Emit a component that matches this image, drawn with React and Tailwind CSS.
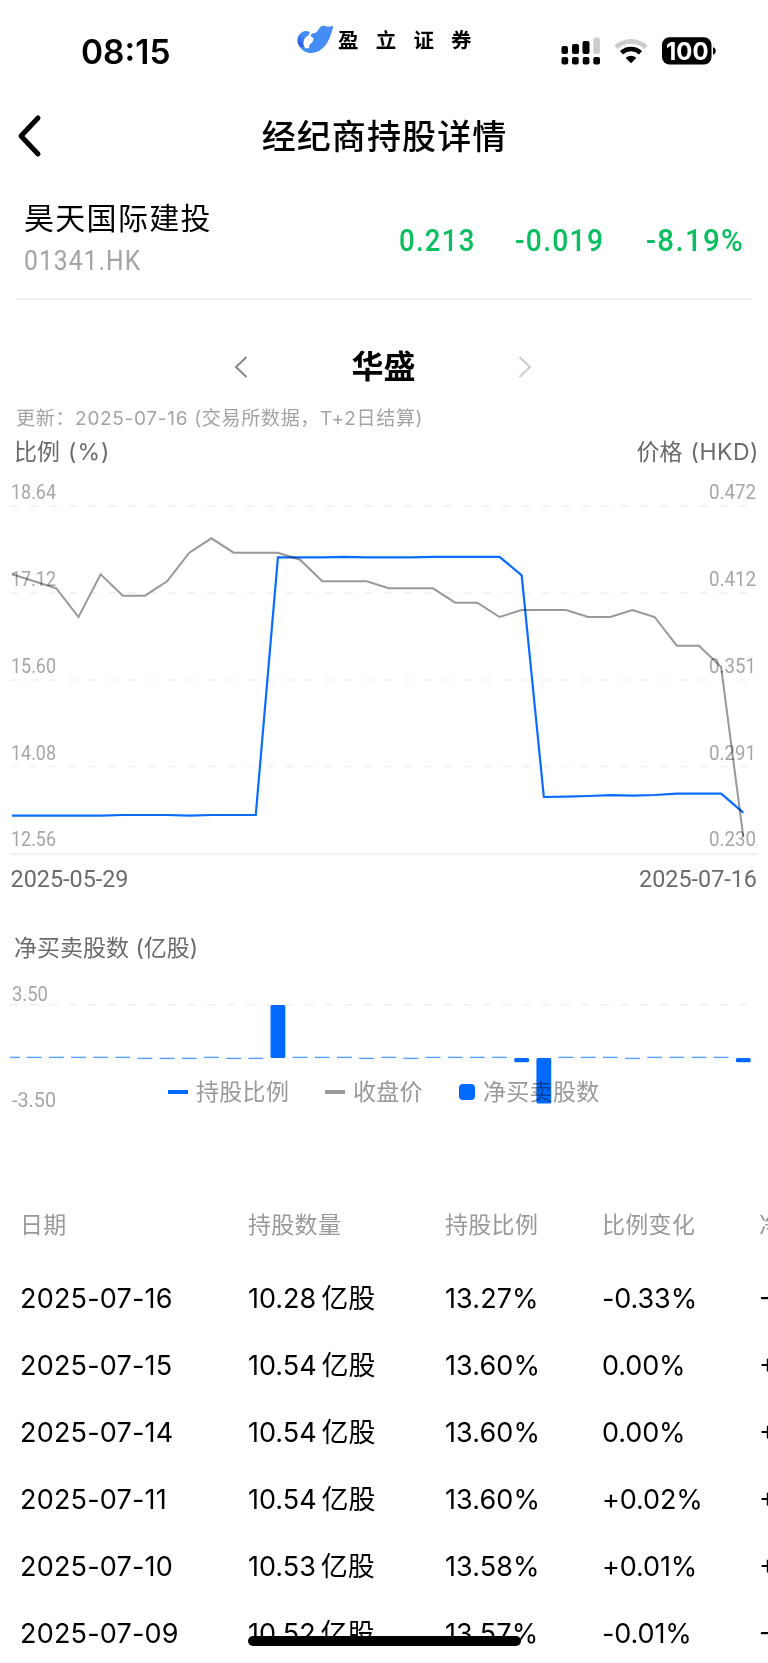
// src/App.jsx

const STEP = 22.16;
const px = (i) => 12 + i * STEP;

// y positions inside the ratio / price chart
const price = [
  104.3, 111.3, 118.3, 147, 104.3, 125.7, 125.7, 111.3, 82.7, 68.3, 82.7, 82.7,
  82.7, 89.7, 111.3, 111.3, 111.3, 118.3, 118.3, 118.3, 132.7, 132.7, 147, 140,
  140, 140, 147, 147, 140, 147, 175.7, 175.7, 197, 366.7,
];
const ratio = [
  345.7, 345.7, 345.7, 345.7, 345.7, 345, 345, 345, 345.6, 345, 345, 345, 87.3,
  87.3, 87.3, 86.8, 87.3, 87.3, 87.3, 86.8, 86.8, 86.8, 86.8, 105.3, 327, 326.6,
  326, 325.2, 325.7, 325, 323.7, 323.7, 323.7, 342.7,
];

const axis = [
  { y: 29.3, left: "18.64", right: "0.472" },
  { y: 116, left: "17.12", right: "0.412" },
  { y: 202.9, left: "15.60", right: "0.351" },
  { y: 289.5, left: "14.08", right: "0.291" },
  { y: 376.2, left: "12.56", right: "0.230" },
];

// days with a small net sell
const down = [6, 7, 8, 10, 11, 16, 18, 28];
const bars = { 12: [15, 53], 23: [68, 4.3], 24: [68, 45.5], 33: [68, 4.3] };

const rows = [
  ["2025-07-16", "10.28", "13.27%", "-0.33%", "-0.26"],
  ["2025-07-15", "10.54", "13.60%", "0.00%", "+0.00"],
  ["2025-07-14", "10.54", "13.60%", "0.00%", "+0.00"],
  ["2025-07-11", "10.54", "13.60%", "+0.02%", "+0.01"],
  ["2025-07-10", "10.53", "13.58%", "+0.01%", "+0.01"],
  ["2025-07-09", "10.52", "13.57%", "-0.01%", "-0.01"],
];

const toPoints = (values) => values.map((y, i) => `${px(i)},${y}`).join(" ");

function AxisText({ x, y, width, size = 19.5, color = "#a6a6a6", children }) {
  return (
    <text
      x={x}
      y={y}
      fontSize={size}
      textLength={width}
      lengthAdjust="spacingAndGlyphs"
      fill={color}
      className="font-['Roboto'] mix-blend-multiply"
    >
      {children}
    </text>
  );
}

function StatusBar() {
  return (
    <header className="flex h-[90px] items-start">
      <div className="w-[297px] pl-[81px] pt-[32px] text-[33.5px] leading-[40px] font-semibold">
        08:15
      </div>

      {/* Brand */}
      <div className="flex w-[264px] items-start pt-[24px]">
        <svg width="37" height="32" viewBox="0 0 37 32" className="mr-1">
          <defs>
            <linearGradient id="wing" x1="0" y1="1" x2="1" y2="0">
              <stop offset="0" stopColor="#2447d8" />
              <stop offset=".6" stopColor="#448df6" />
            </linearGradient>
          </defs>
          <path
            d="M1.500 20C4 26.500 9 29 14 29C25 28.500 32 20 36 3.500C36.200 1.500 34.500 1.500 33.500 2.500C31 3.500 28 1 25 2C22 3 21.500 7 19 8.500C17.500 9.300 15.500 8.800 14 10.500L12 24C8 25 4 24 1.500 20Z"
            fill="#448df6"
          />
          <path
            d="M13 8.200C10.500 6.500 7 6.500 4 9C0 12 -0.500 18 2 21.500C3 23 5 24 8 24L7 22C6 17 8 13 11.500 11.500Z"
            fill="url(#wing)"
          />
          <path
            d="M7.200 22.300C5.500 17 7.500 13 11.500 11.800L13.800 9.300L13.200 12.200L16.500 14C16.500 19 12.500 21.500 7.200 22.300Z"
            fill="#fff"
          />
        </svg>
        <span className="text-[20.5px] leading-[33px] font-bold tracking-[17.200px] whitespace-nowrap">
          盈立证券
        </span>
      </div>

      <svg width="158" height="30" viewBox="561 36 158 30" className="mt-[36px]">
        <g fill="#000">
          <rect x="561.500" y="46" width="6.500" height="8" rx="2" />
          <rect x="572" y="44" width="7" height="10" rx="2" />
          <rect x="582.500" y="41" width="7" height="13" rx="2" />
          <rect x="593.300" y="37.500" width="6.700" height="16.500" rx="2" fill="#ccc" />
          <rect x="561.500" y="57" width="6.700" height="7.500" rx="2" />
          <rect x="572" y="57" width="6.700" height="7.500" rx="2" />
          <rect x="582.700" y="57" width="6.700" height="7.500" rx="2" />
          <rect x="593.300" y="57" width="6.700" height="7.500" rx="2" />
        </g>
        <path d="M616 47.300A22 22 0 0 1 646 47.300" fill="none" stroke="#ccc" strokeWidth="4.600" />
        <path d="M621.500 52.700A14 14 0 0 1 640.500 52.700" fill="none" stroke="#000" strokeWidth="4.600" />
        <path d="M625.700 58C629 55 633 55 636.300 58L631 63.300Z" fill="#000" />
        <rect x="662" y="37.300" width="49.500" height="27.200" rx="7.500" fill="#000" />
        <path d="M713 47.300C716.700 48.500 716.700 53.500 713 54.700Z" fill="#000" />
        <text
          x="666"
          y="59.800"
          fontSize="24.500"
          textLength="42.500"
          lengthAdjust="spacingAndGlyphs"
          fill="#fff"
          className="font-['Inter'] font-bold"
        >
          100
        </text>
      </svg>
    </header>
  );
}

function TitleBar() {
  return (
    <div className="flex h-[92px] items-center px-4">
      <svg width="28" height="44" viewBox="0 0 28 44" fill="none">
        <path d="M22 4L5 22L22 40" stroke="#000" strokeWidth="5" strokeLinecap="round" strokeLinejoin="round" />
      </svg>
      <h1 className="flex-1 pr-[27px] text-center text-[34px] font-medium tracking-[1.100px]">
        经纪商持股详情
      </h1>
    </div>
  );
}

function Quote() {
  return (
    <section className="mx-4 flex h-[118px] border-b-2 border-[#f0f0f0] pl-2">
      <div className="w-[375px] pt-[16px]">
        <div className="text-[30px] leading-[40px] tracking-[1.300px]">昊天国际建投</div>
        <div className="mt-[3px] origin-left scale-x-[0.88] font-['Roboto'] text-[28px] leading-[40px] tracking-[1.200px] text-[#a3a3a3]">
          01341.HK
        </div>
      </div>
      <div className="flex flex-1 pt-[39px] font-['Roboto'] text-[31px] leading-[40px] font-medium tracking-[1.400px] text-[#0abf5f]">
        <span className="w-[116px] origin-left scale-x-[0.89]">0.213</span>
        <span className="w-[131px] origin-left scale-x-[0.91]">-0.019</span>
        <span className="origin-left scale-x-[0.95]">-8.19%</span>
      </div>
    </section>
  );
}

function BrokerSwitch() {
  return (
    <div className="flex h-[103px] items-center justify-center pt-[30px] pr-[3px]">
      <svg width="14" height="24" viewBox="0 0 14 24" fill="none">
        <path d="M12.500 2L2 12L12.500 22" stroke="#888" strokeWidth="2" />
      </svg>
      <h2 className="w-[270px] pt-px pl-[2px] text-center text-[32px] leading-[40px] font-bold">华盛</h2>
      <svg width="14" height="24" viewBox="0 0 14 24" fill="none">
        <path d="M1.500 2L12 12L1.500 22" stroke="#ccc" strokeWidth="2" />
      </svg>
    </div>
  );
}

function TrendChart() {
  return (
    <svg width="768" height="430" viewBox="0 0 768 430" className="block">
      {[36.3, 123, 210, 296.5].map((y) => (
        <line key={y} x1="10" x2="750" y1={y} y2={y} stroke="#efefef" strokeWidth="1.500" strokeDasharray="8 11.700" />
      ))}
      <line x1="10" x2="758" y1="384.300" y2="384.300" stroke="#f0f0f0" strokeWidth="2" />
      <polyline points={toPoints(price)} fill="none" stroke="#999" strokeWidth="2" />
      <polyline points={toPoints(ratio)} fill="none" stroke="#0a6cff" strokeWidth="2.200" className="mix-blend-multiply" />
      {axis.map((a) => (
        <g key={a.left}>
          <AxisText x={11} y={a.y} width={45}>{a.left}</AxisText>
          <AxisText x={709} y={a.y} width={47}>{a.right}</AxisText>
        </g>
      ))}
      <AxisText x={10.5} y={417.3} width={118} size={24} color="#6b6b6b">2025-05-29</AxisText>
      <AxisText x={639} y={417.3} width={118} size={24} color="#6b6b6b">2025-07-16</AxisText>
    </svg>
  );
}

function Legend() {
  return (
    <div className="absolute top-[84px] left-[168px] flex h-9 items-center text-[23px] leading-[36px] tracking-[0.300px] whitespace-nowrap text-[#999] mix-blend-multiply">
      <i className="mr-2 h-1 w-5 bg-[#006aff]" />
      <span className="w-[129px]">持股比例</span>
      <i className="mr-2 h-1 w-5 bg-[#999]" />
      <span className="w-[106px]">收盘价</span>
      <i className="mr-2 size-4 rounded-[4px] bg-[#006aff]" />
      <span>净买卖股数</span>
    </div>
  );
}

function NetChart() {
  return (
    <div className="relative h-[210px]">
      <svg width="768" height="140" viewBox="0 0 768 140" className="block overflow-visible">
        <line x1="10" x2="750" y1="14.700" y2="14.700" stroke="#efefef" strokeWidth="1.500" strokeDasharray="8 11.700" />
        {price.map((_, i) => {
          if (bars[i]) {
            const [y, h] = bars[i];
            return <rect key={i} x={px(i) - 7.4} y={y} width="14.800" height={h} rx="1.500" fill="#006aff" />;
          }
          const x = i === 0 ? 10 : px(i) - 7.4;
          const w = i === 0 ? 10 : 14.8;
          return (
            <rect key={i} x={x} y={down.includes(i) ? 67.7 : 66.7} width={w} height="1.400" fill="#5a9eff" />
          );
        })}
        <AxisText x={12} y={11} width={36}>3.50</AxisText>
        <AxisText x={12} y={117.2} width={44}>-3.50</AxisText>
      </svg>
      <Legend />
    </div>
  );
}

function HoldingsTable() {
  const grid = "grid grid-cols-[228px_197px_157px_157px_120px] pl-[20px] whitespace-nowrap";
  return (
    <section className="w-[900px]">
      <div className={`${grid} h-[65px] text-[23px] leading-[50px] tracking-[0.300px] text-[#999]`}>
        <span>日期</span>
        <span>持股数量</span>
        <span>持股比例</span>
        <span>比例变化</span>
        <span>净买卖股数</span>
      </div>
      {rows.map(([date, amount, share, change, net]) => (
        <div key={date} className={`${grid} h-[67px] text-[27px] leading-[67px] text-black`}>
          <span className="tracking-[0.200px]">{date}</span>
          <span>
            {amount}
            <span className="ml-[5px]">亿股</span>
          </span>
          <span className="tracking-[0.100px]">{share}</span>
          <span className="tracking-[-0.100px]">{change}</span>
          <span>{net}</span>
        </div>
      ))}
    </section>
  );
}

export default function App() {
  return (
    <main className="relative h-[1663px] w-[768px] overflow-hidden bg-white font-['Inter','Noto_Sans_CJK_SC',sans-serif] text-black">
      <StatusBar />
      <TitleBar />
      <Quote />
      <BrokerSwitch />

      <div className="h-[32px] pl-4 text-[19px] leading-[32px] tracking-[0.700px] text-[#a3a3a3]">
        更新：2025-07-16 (交易所数据，T+2日结算)
      </div>
      <div className="flex h-[35px] justify-between pr-[9px] pl-[14px] text-[23px] leading-[35px] text-[#6b6b6b]">
        <span>
          比例<span className="ml-2 tracking-[1px]">(%)</span>
        </span>
        <span>
          价格<span className="ml-2 tracking-[0.500px]">(HKD)</span>
        </span>
      </div>
      <TrendChart />
      <div className="h-[90px] pt-[30px] pl-[14px] text-[23px] leading-[36px] text-[#6b6b6b]">
        净买卖股数 (亿股)
      </div>
      <NetChart />
      <HoldingsTable />

      {/* Home indicator */}
      <div className="absolute top-[1636px] left-[248px] h-[10px] w-[273px] rounded-full bg-black" />
    </main>
  );
}
